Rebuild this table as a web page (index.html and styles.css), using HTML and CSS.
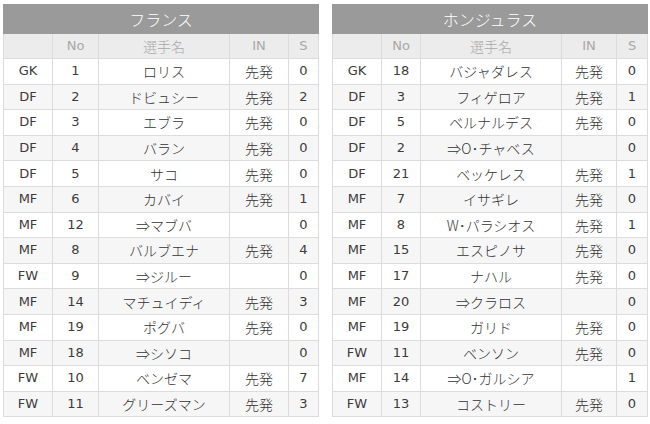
FILE: index.html
```html
<!DOCTYPE html>
<html lang="ja">
<head>
<meta charset="utf-8">
<link rel="stylesheet" href="styles.css">
</head>
<body>
<div class="wrap">
  <table class="tbl">
    <colgroup><col class="c1"><col class="c2l"><col class="c3l"><col class="c4l"><col class="c5"></colgroup>
    <thead>
      <tr class="title"><th colspan="5">フランス</th></tr>
      <tr class="head"><th></th><th>No</th><th>選手名</th><th>IN</th><th>S</th></tr>
    </thead>
    <tbody>
      <tr><td>GK</td><td>1</td><td>ロリス</td><td>先発</td><td>0</td></tr>
      <tr><td>DF</td><td>2</td><td>ドビュシー</td><td>先発</td><td>2</td></tr>
      <tr><td>DF</td><td>3</td><td>エブラ</td><td>先発</td><td>0</td></tr>
      <tr><td>DF</td><td>4</td><td>バラン</td><td>先発</td><td>0</td></tr>
      <tr><td>DF</td><td>5</td><td>サコ</td><td>先発</td><td>0</td></tr>
      <tr><td>MF</td><td>6</td><td>カバイ</td><td>先発</td><td>1</td></tr>
      <tr><td>MF</td><td>12</td><td>⇒マブバ</td><td></td><td>0</td></tr>
      <tr><td>MF</td><td>8</td><td>バルブエナ</td><td>先発</td><td>4</td></tr>
      <tr><td>FW</td><td>9</td><td>⇒ジルー</td><td></td><td>0</td></tr>
      <tr><td>MF</td><td>14</td><td>マチュイディ</td><td>先発</td><td>3</td></tr>
      <tr><td>MF</td><td>19</td><td>ポグバ</td><td>先発</td><td>0</td></tr>
      <tr><td>MF</td><td>18</td><td>⇒シソコ</td><td></td><td>0</td></tr>
      <tr><td>FW</td><td>10</td><td>ベンゼマ</td><td>先発</td><td>7</td></tr>
      <tr><td>FW</td><td>11</td><td>グリーズマン</td><td>先発</td><td>3</td></tr>
    </tbody>
  </table>
  <table class="tbl">
    <colgroup><col class="c1"><col class="c2r"><col class="c3r"><col class="c4r"><col class="c5r"></colgroup>
    <thead>
      <tr class="title"><th colspan="5">ホンジュラス</th></tr>
      <tr class="head"><th></th><th>No</th><th>選手名</th><th>IN</th><th>S</th></tr>
    </thead>
    <tbody>
      <tr><td>GK</td><td>18</td><td>バジャダレス</td><td>先発</td><td>0</td></tr>
      <tr><td>DF</td><td>3</td><td>フィゲロア</td><td>先発</td><td>1</td></tr>
      <tr><td>DF</td><td>5</td><td>ベルナルデス</td><td>先発</td><td>0</td></tr>
      <tr><td>DF</td><td>2</td><td>⇒O･チャベス</td><td></td><td>0</td></tr>
      <tr><td>DF</td><td>21</td><td>ベッケレス</td><td>先発</td><td>1</td></tr>
      <tr><td>MF</td><td>7</td><td>イサギレ</td><td>先発</td><td>0</td></tr>
      <tr><td>MF</td><td>8</td><td>W･パラシオス</td><td>先発</td><td>1</td></tr>
      <tr><td>MF</td><td>15</td><td>エスピノサ</td><td>先発</td><td>0</td></tr>
      <tr><td>MF</td><td>17</td><td>ナハル</td><td>先発</td><td>0</td></tr>
      <tr><td>MF</td><td>20</td><td>⇒クラロス</td><td></td><td>0</td></tr>
      <tr><td>MF</td><td>19</td><td>ガリド</td><td>先発</td><td>0</td></tr>
      <tr><td>FW</td><td>11</td><td>ベンソン</td><td>先発</td><td>0</td></tr>
      <tr><td>MF</td><td>14</td><td>⇒O･ガルシア</td><td></td><td>1</td></tr>
      <tr><td>FW</td><td>13</td><td>コストリー</td><td>先発</td><td>0</td></tr>
    </tbody>
  </table>
</div>
</body>
</html>
```
FILE: styles.css
```css
html, body {
  margin: 0;
  padding: 0;
  background: #fff;
}
body {
  font-family: "DejaVu Sans", "Noto Sans CJK JP", sans-serif;
  color: #3c3c3c;
}
.wrap {
  display: flex;
  gap: 13px;
  padding: 4px 0 0 3px;
}
.tbl {
  width: 315px;
  table-layout: fixed;
  border-collapse: collapse;
  border: 1px solid #dcdcdc;
  font-size: 13px;
}
.c1 { width: 49px; }
.c2l { width: 46px; }
.c3l { width: 131px; }
.c4l { width: 59px; }
.c5 { width: 30px; }
.c2r { width: 39px; }
.c3r { width: 141px; }
.c4r { width: 55px; }
.c5r { width: 31px; }
.tbl th, .tbl td {
  padding: 0;
  text-align: center;
  font-weight: normal;
  line-height: 16px;
  white-space: nowrap;
  overflow: hidden;
}
.tbl tbody td:nth-child(3),
.tbl tbody td:nth-child(4),
.head th:nth-child(3) {
  font-family: "Noto Sans CJK JP", sans-serif;
  font-size: 14px;
  font-weight: 300;
  color: #333;
}
.title th {
  height: 28px;
  background: #9a9a9a;
  color: #fff;
  font-family: "Noto Sans CJK JP", sans-serif;
  font-size: 16px;
  font-weight: 300;
  border: 1px solid #9a9a9a;
}
.head th,
.tbl .head th:nth-child(3) {
  height: 24px;
  background: #ececec;
  color: #a8a8a8;
  border: 1px solid #dcdcdc;
}
.tbl td {
  height: 24.6px;
  border: 1px solid #dcdcdc;
}
.tbl tbody tr:nth-child(even) td {
  background: #f6f6f6;
}
```
